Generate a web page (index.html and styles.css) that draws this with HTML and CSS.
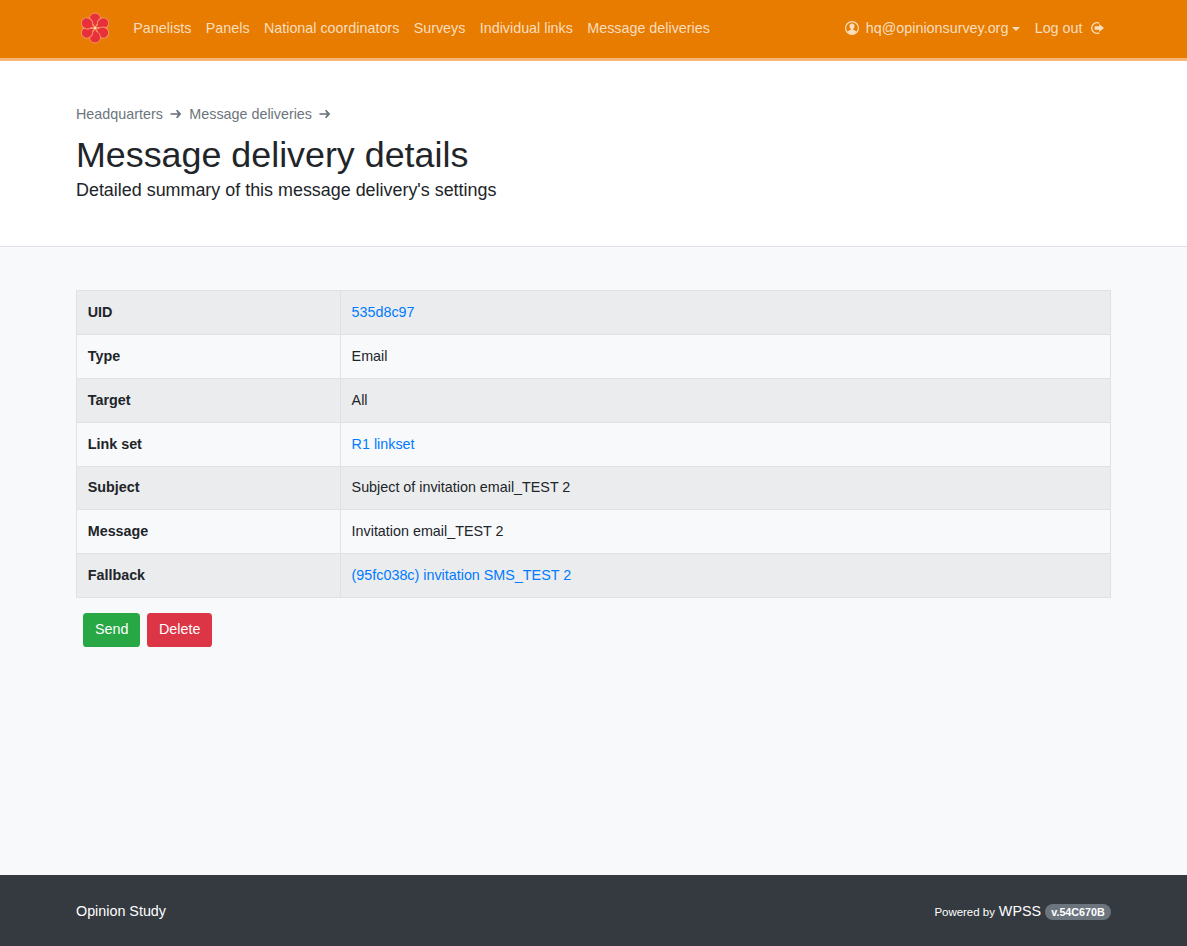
FILE: index.html
```
<!DOCTYPE html>
<html lang="en">
<head>
<meta charset="utf-8">
<title>Message delivery details</title>
<link rel="stylesheet" href="styles.css">
</head>
<body>
<nav class="navbar">
  <div class="container navbar-inner">
    <a class="brand" href="#" aria-label="Home">
      <svg class="flower" viewBox="0 0 30 32">
        <g class="petals">
          <path id="petal" d="M15 16 L13.500 12.500 C11 11.500 9.500 9 9.500 6.500 A5.500 5.500 0 0 1 20.500 6.500 C20.500 9 19 11.500 16.500 12.500 Z"/>
          <use href="#petal" transform="rotate(60 15 16)"/>
          <use href="#petal" transform="rotate(120 15 16)"/>
          <use href="#petal" transform="rotate(180 15 16)"/>
          <use href="#petal" transform="rotate(240 15 16)"/>
          <use href="#petal" transform="rotate(300 15 16)"/>
        </g>
        <circle class="core" cx="15" cy="16" r="1.2"/>
      </svg>
    </a>
    <div class="links">
      <a href="#">Panelists</a>
      <a href="#">Panels</a>
      <a href="#">National coordinators</a>
      <a href="#">Surveys</a>
      <a href="#">Individual links</a>
      <a href="#">Message deliveries</a>
    </div>
    <div class="account">
      <a class="user" href="#">
        <svg class="icon user-icon" viewBox="0 0 14 14"><circle cx="7" cy="7" r="6.4" fill="none" stroke="currentColor" stroke-width="1.2"/><path fill="currentColor" d="M7 2.600c-1.600 0-2.500 1-2.500 2.600 0 1.100.5 2.100 1.200 2.600v1L2.600 10.300C3.700 12 5.300 12.900 7 12.900s3.300-.9 4.400-2.600L8.300 8.800V7.800C9 7.300 9.500 6.300 9.500 5.200 9.500 3.600 8.600 2.600 7 2.600z"/></svg>
        <span>hq@opinionsurvey.org</span><i class="caret"></i>
      </a>
      <a class="logout" href="#">
        <span>Log out</span>
        <svg class="icon" viewBox="0 0 14 14"><path fill="none" stroke="currentColor" stroke-width="1.300" d="M9.300 2.100A5.400 5.400 0 1 0 9.300 11.900"/><path fill="currentColor" d="M4.600 5.300h4.600V2.900L14 7l-4.800 4.100V8.700H4.600z"/></svg>
      </a>
    </div>
  </div>
</nav>
<header class="page-header">
  <div class="container">
    <div class="crumbs">
      <a href="#">Headquarters</a>
      <svg class="arrow" viewBox="0 0 12 10"><path class="shaft" d="M.5 5H9"/><path class="head" d="M6 1.500L7.300.7L11.300 5L7.300 9.300L6 8.500L8.300 5Z"/></svg>
      <a href="#">Message deliveries</a>
      <svg class="arrow" viewBox="0 0 12 10"><path class="shaft" d="M.5 5H9"/><path class="head" d="M6 1.500L7.300.7L11.300 5L7.300 9.300L6 8.500L8.300 5Z"/></svg>
    </div>
    <h1>Message delivery details</h1>
    <p class="lead">Detailed summary of this message delivery's settings</p>
  </div>
</header>
<main class="container content">
  <table class="details">
    <tr><th>UID</th><td><a href="#">535d8c97</a></td></tr>
    <tr><th>Type</th><td>Email</td></tr>
    <tr><th>Target</th><td>All</td></tr>
    <tr><th>Link set</th><td><a href="#">R1 linkset</a></td></tr>
    <tr class="compact"><th>Subject</th><td>Subject of invitation email_TEST 2</td></tr>
    <tr><th>Message</th><td>Invitation email_TEST 2</td></tr>
    <tr><th>Fallback</th><td><a href="#">(95fc038c) invitation SMS_TEST 2</a></td></tr>
  </table>
  <div class="actions">
    <button class="btn send">Send</button>
    <button class="btn delete">Delete</button>
  </div>
</main>
<footer class="footer">
  <div class="container footer-inner">
    <span>Opinion Study</span>
    <span class="powered"><small>Powered by</small> WPSS <b class="badge">v.54C670B</b></span>
  </div>
</footer>
</body>
</html>
```
FILE: styles.css
```
* { box-sizing: border-box; }
body {
  margin: 0;
  min-height: 946px;
  display: flex;
  flex-direction: column;
  background: #f8f9fb;
  color: #212529;
  font: 14.34px/21.6px "Liberation Sans", Arial, sans-serif;
}
a { color: #007bff; text-decoration: none; }
.container { width: 1035px; margin: 0 auto; }
.navbar { height: 61px; background: #e77c00; border-bottom: 3px solid #f4b776; }
.navbar-inner { display: flex; align-items: center; height: 57px; }
.navbar a { color: rgba(255, 255, 255, .75); white-space: nowrap; }
.brand { display: flex; margin: 0 23.8px 0 3.500px; }
.flower { width: 30px; height: 32px; margin-bottom: 1px; }
.petals { fill: #e8303a; stroke: #f39a68; stroke-width: .9; }
.core { fill: #fbd9b8; }
.links { display: flex; gap: 14.33px; }
.account { display: flex; gap: 14.33px; margin-left: auto; margin-right: 7px; }
.account a { display: flex; align-items: center; }
.icon { width: 14px; height: 14px; margin-bottom: 1px; }
.user-icon { margin-right: 7px; }
.logout .icon { margin-left: 7.500px; }
.caret { margin: 1px 0 0 4px; border: 4px solid transparent; border-top-color: currentColor; border-bottom: 0; }
.page-header { height: 186px; padding-top: 43px; background: #fff; border-bottom: 1px solid #dee2e6; }
.crumbs { display: flex; align-items: center; }
.crumbs a { color: #6c757d; }
.arrow { width: 12px; height: 10px; margin: 0 7px 1px 7.500px; }
.shaft { fill: none; stroke: #6c757d; stroke-width: 1.6; }
.head { fill: #6c757d; }
h1 { margin: 8px 0 0; font-size: 35.83px; line-height: 43px; font-weight: 400; }
.lead { margin: 0; font-size: 17.92px; line-height: 27px; }
.content { flex: 1; padding-top: 43px; }
.details { width: 100%; table-layout: fixed; border-spacing: 0; border: solid #dee2e6; border-width: 1px 1px 0; }
.details th, .details td { height: 44px; padding: 0 10.75px; border-bottom: 1px solid #dee2e6; text-align: left; }
.details .compact th, .details .compact td { height: 43px; }
.details th { width: 263px; }
.details td { padding-left: 10.600px; border-left: 1px solid #dee2e6; }
.details tr:nth-child(odd) { background: #ebecee; }
.actions { display: flex; gap: 7px; padding: 15px 7px; }
.btn { height: 34px; padding: 0 12px 1px; border: 0; border-radius: 3.6px; color: #fff; font: inherit; }
.send { width: 57px; background: #28a745; }
.delete { width: 65px; background: #dc3545; }
.footer { height: 71px; background: #343a40; color: #fff; }
.footer-inner { display: flex; justify-content: space-between; align-items: center; height: 73px; }
.powered { padding-top: 1px; }
small { font-size: 11.46px; }
.badge { display: inline-block; padding: 2.7px 6.2px; border-radius: 10rem; background: #6c757d; font-size: 10.75px; line-height: 10.8px; vertical-align: baseline; }
```
